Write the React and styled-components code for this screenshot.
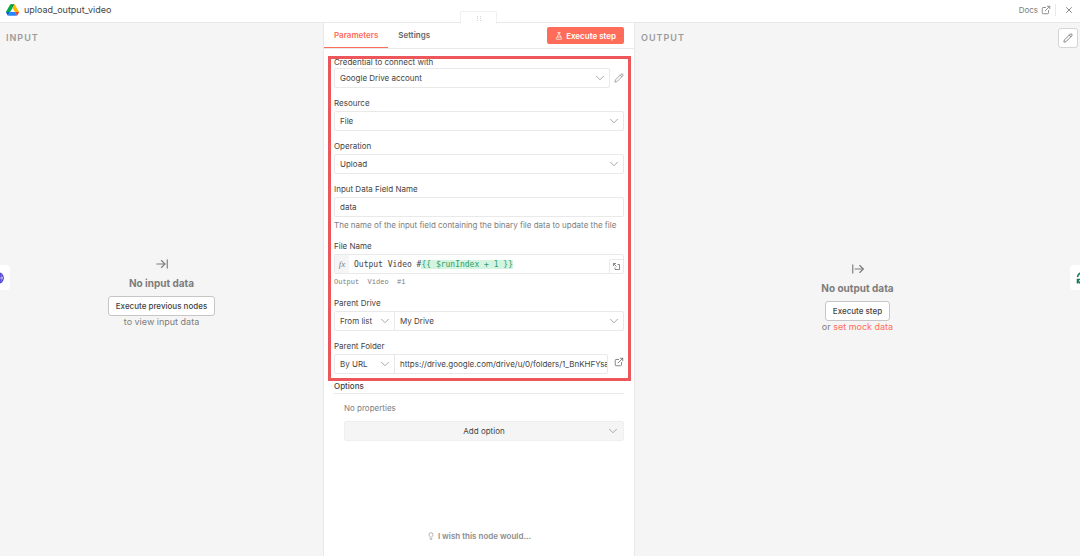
import React from "react";
import styled, { createGlobalStyle, css } from "styled-components";
import {
  ArrowRightFromLine,
  ArrowRightToLine,
  ChevronDown,
  ExternalLink,
  FlaskConical,
  Lightbulb,
  Pencil,
  X,
} from "lucide-react";

const color = {
  accent: "#ff6d5a",
  canvas: "#f5f5f5",
  line: "#e9e9e9",
  strong: "#c6c6c6",
  text: "#444444",
  muted: "#7d7d7d",
  faint: "#9a9a9a",
};

const GlobalStyle = createGlobalStyle`
  *, *::before, *::after { box-sizing: border-box; }
  body { margin: 0; background: ${color.canvas}; }
  body, button, input, select { font-family: Inter, "Liberation Sans", sans-serif; }
  button, input, select { margin: 0; }
`;

const Page = styled.div`
  display: flex;
  flex-direction: column;
  min-height: 100vh;
  color: ${color.text};
  font-size: 8px;
  line-height: 12px;
`;

const TopBar = styled.header`
  display: flex;
  align-items: center;
  justify-content: space-between;
  height: 23px;
  padding: 0 6px 2px;
  background: #fff;
  border-bottom: 1px solid ${color.line};
`;

const NodeTitle = styled.h1`
  display: flex;
  align-items: center;
  gap: 5px;
  margin: 0;
  font-size: 9px;
  font-weight: 400;
`;

const TopActions = styled.div`
  display: flex;
  align-items: center;
`;

const DocsLink = styled.a`
  display: flex;
  align-items: center;
  gap: 3px;
  padding-right: 4px;
  border-right: 1px solid ${color.line};
  color: ${color.muted};
  text-decoration: none;
`;

const IconButton = styled.button`
  display: grid;
  align-items: center;
  justify-items: ${(p) => (p.$end ? "end" : "center")};
  flex: none;
  width: ${(p) => p.$size || 10}px;
  height: ${(p) => p.$size || 10}px;
  padding: 0;
  border: 0;
  background: none;
  color: #707070;
`;

const CloseButton = styled(IconButton)`
  margin-left: 8px;
`;

const EditOutputButton = styled(IconButton)`
  background: #fff;
  border: 1px solid #d4d4d4;
  border-radius: 3px;
`;

const Columns = styled.main`
  display: grid;
  grid-template-columns: minmax(0, 323fr) 312px minmax(0, 445fr);
  flex: 1;
`;

const SidePanel = styled.section`
  position: relative;
  display: flex;
  flex-direction: column;
  overflow: hidden;
`;

const SideHeader = styled.div`
  display: flex;
  align-items: flex-start;
  justify-content: space-between;
  height: ${(p) => (p.$tall ? 33 : 23)}px;
  padding: 5px 2px 0 6px;
`;

const SideTitle = styled.h2`
  margin: 0;
  color: ${color.faint};
  font-size: 9px;
  font-weight: 600;
  line-height: 20px;
  letter-spacing: 1px;
`;

const EmptyState = styled.div`
  display: flex;
  flex: 1;
  flex-direction: column;
  align-items: center;
  justify-content: center;
  padding-bottom: 18px;
  color: ${color.muted};
  font-size: 9px;
`;

const EmptyTitle = styled.h3`
  margin: 6px 0;
  font-size: 10px;
  font-weight: 700;
  line-height: 13px;
`;

const OutlineButton = styled.button`
  height: 20px;
  padding: 0 7px;
  background: #fff;
  border: 1px solid ${color.strong};
  border-radius: 3px;
  color: ${color.text};
  font-size: 8px;
  font-weight: 500;
`;

const TextLink = styled.a`
  color: ${color.accent};
  text-decoration: none;
`;

const NeighbourTile = styled.button`
  position: absolute;
  top: 242px;
  ${(p) => p.$side}: 0;
  display: flex;
  align-items: center;
  justify-content: ${(p) => (p.$side === "left" ? "flex-end" : "flex-start")};
  width: 10px;
  height: 25px;
  padding: 0 ${(p) => (p.$side === "left" ? "6px 0 0" : "0 0 6px")};
  overflow: hidden;
  background: #fff;
  border: 0;
  border-radius: ${(p) => (p.$side === "left" ? "0 4px 4px 0" : "4px 0 0 4px")};
  color: ${(p) => p.$tint};

  svg { flex: none; }
`;

const CenterPanel = styled.section`
  position: relative;
  display: flex;
  flex-direction: column;
  background: #fff;
  border: solid ${color.line};
  border-width: 0 1px;
`;

const DragTab = styled.div`
  position: absolute;
  top: -12px;
  left: 50%;
  display: grid;
  place-items: center;
  width: 37px;
  height: 13px;
  margin-left: -19px;
  background: #fff;
  border: 1px solid #f0f0f0;
  border-bottom: 0;
  border-radius: 2px 2px 0 0;
`;

const TabBar = styled.div`
  display: flex;
  align-items: center;
  height: 26px;
  padding-right: 10px;
  border-bottom: 1px solid ${color.line};
`;

const Tab = styled.button`
  height: 25px;
  padding: 0 10px;
  background: none;
  border: 0;
  border-bottom: 1px solid ${(p) => (p.$active ? color.accent : "transparent")};
  color: ${(p) => (p.$active ? color.accent : "#666")};
  font-size: 8px;
  font-weight: 600;
`;

const RunButton = styled.button`
  display: flex;
  align-items: center;
  justify-content: center;
  gap: 3px;
  height: 17px;
  margin-left: auto;
  padding: 0 8px;
  background: ${color.accent};
  border: 0;
  border-radius: 2px;
  color: #fff;
  font-size: 8px;
  font-weight: 600;
`;

const Form = styled.form`
  display: flex;
  flex: 1;
  flex-direction: column;
  padding: 7px 10px 14px;
`;

const Fields = styled.div`
  position: relative;
  display: flex;
  flex-direction: column;
  gap: 9px;
`;

const Highlight = styled.div`
  position: absolute;
  inset: 0 -7px -7px -6px;
  border: 3px solid #ed565a;
  pointer-events: none;
`;

const Field = styled.div`
  display: flex;
  flex-direction: column;
`;

const Label = styled.label`
  margin-bottom: ${(p) => (p.$tight ? 0 : 2)}px;
  font-weight: 400;
`;

const Row = styled.div`
  display: flex;
  align-items: ${(p) => (p.$top ? "flex-start" : "center")};
`;

const controlBox = css`
  width: 100%;
  height: 20px;
  padding: 0 0 0 5px;
  background: #fff;
  border: 1px solid ${color.line};
  border-radius: ${(p) => p.$corners || "2px"};
  color: ${color.text};
  font-size: 8px;
`;

const SelectShell = styled.div`
  position: relative;
  flex: ${(p) => (p.$width ? `0 0 ${p.$width}px` : 1)};
  margin-right: ${(p) => (p.$overlap ? -1 : 0)}px;

  svg {
    position: absolute;
    top: 3px;
    right: 3px;
    color: #999;
    pointer-events: none;
  }
`;

const StyledSelect = styled.select`
  ${controlBox}
  appearance: none;
`;

const TextInput = styled.input`
  ${controlBox}
`;

const Help = styled.p`
  margin: 2px 0 0;
  color: ${color.muted};
`;

const Preview = styled.output`
  margin-top: 2px;
  color: ${color.muted};
  font-family: "Liberation Mono", monospace;
  font-size: 7px;
  white-space: pre;
`;

const Expression = styled.div`
  position: relative;
  display: flex;
  height: 20px;
  overflow: hidden;
  border: 1px solid ${color.line};
  border-radius: 2px;
`;

const FxBadge = styled.span`
  display: grid;
  place-items: center;
  width: 14px;
  background: ${color.canvas};
  color: ${color.muted};
  font-family: "Liberation Serif", serif;
  font-size: 9px;
  font-style: italic;
`;

const ExpressionText = styled.div`
  flex: 1;
  padding-left: 5px;
  font-family: "DejaVu Sans Mono", monospace;
  font-size: 8px;
  line-height: 19px;
  outline: 0;
  white-space: pre;
`;

const Token = styled.span`
  background: #d3f4e0;
  color: #2f9e6b;
`;

const ExpandButton = styled(IconButton)`
  position: absolute;
  right: 0;
  bottom: 0;
  background: #fff;
  border: solid ${color.line};
  border-width: 1px 0 0 1px;
  border-radius: 2px 0 0 0;
`;

const OptionsTitle = styled.h3`
  margin: 6px 0 0;
  padding-bottom: 1px;
  border-bottom: 1px solid ${color.line};
  font-size: 8px;
  font-weight: 500;
`;

const Options = styled.div`
  display: flex;
  flex-direction: column;
  gap: 7px;
  padding: 8px 0 0 10px;
  color: ${color.muted};
`;

const AddOption = styled.button`
  display: grid;
  grid-template-columns: 1fr auto 1fr;
  align-items: center;
  height: 20px;
  padding: 0 3px;
  background: ${color.canvas};
  border: 1px solid #efefef;
  border-radius: 2px;
  color: ${color.text};
  font-size: 8px;

  span { grid-column: 2; }
  svg { justify-self: end; color: #999; }
`;

const WishButton = styled.button`
  display: flex;
  align-items: center;
  align-self: center;
  gap: 3px;
  height: 12px;
  margin-top: auto;
  padding: 0;
  background: none;
  border: 0;
  color: #8c8c8c;
  font-size: 8px;
  font-weight: 600;
`;

const Chevron = () => <ChevronDown size={14} strokeWidth={1.5} aria-hidden="true" />;

function Select({ id, value, width, overlap, corners, label }) {
  return (
    <SelectShell $width={width} $overlap={overlap}>
      <StyledSelect id={id} aria-label={label} defaultValue={value} $corners={corners}>
        <option>{value}</option>
      </StyledSelect>
      <Chevron />
    </SelectShell>
  );
}

const DriveLogo = () => (
  <svg width="13" height="12" viewBox="0 0 87.3 78" aria-hidden="true">
    <path fill="#0066da" d="m6.6 66.85 3.85 6.65c.8 1.4 1.95 2.5 3.3 3.3L27.5 53H0c0 1.55.4 3.1 1.2 4.5z" />
    <path fill="#00ac47" d="M43.65 25 29.9 1.2c-1.35.8-2.5 1.9-3.3 3.3L1.2 48.5A9 9 0 0 0 0 53h27.5z" />
    <path fill="#ea4335" d="M73.55 76.8c1.35-.8 2.5-1.9 3.3-3.3l1.6-2.75L86.1 57.5c.8-1.4 1.2-2.95 1.2-4.5H59.8l5.85 11.5z" />
    <path fill="#00832d" d="M43.65 25 57.4 1.2C56.05.4 54.5 0 52.9 0H34.4c-1.6 0-3.15.45-4.5 1.2z" />
    <path fill="#2684fc" d="M59.8 53H27.5L13.75 76.8c1.35.8 2.9 1.2 4.5 1.2h50.8c1.6 0 3.15-.45 4.5-1.2z" />
    <path fill="#ffba00" d="M73.4 26.5 60.7 4.5c-.8-1.4-1.95-2.5-3.3-3.3L43.65 25 59.8 53h27.45c0-1.55-.4-3.1-1.2-4.5z" />
  </svg>
);

const DragDots = () => (
  <svg width="4" height="5" viewBox="0 0 4 5" fill="#d6d6d6" aria-hidden="true">
    <path d="M0 0h1v1H0zM3 0h1v1H3zM0 2h1v1H0zM3 2h1v1H3zM0 4h1v1H0zM3 4h1v1H3z" />
  </svg>
);

const ExpandIcon = () => (
  <svg width="7" height="7" viewBox="0 0 14 14" fill="none" stroke="currentColor" strokeWidth="1.6" aria-hidden="true">
    <path d="M1 6V1h5M1 1l6 6M9 3h4v10H4V9" />
  </svg>
);

const GlobeIcon = () => (
  <svg width="12" height="12" viewBox="0 0 12 12" fill="none" stroke="currentColor" strokeWidth="1.2" aria-hidden="true">
    <circle cx="6" cy="6" r="5.3" />
    <ellipse cx="6" cy="6" rx="3" ry="5.3" />
    <path d="M1.2 4h9.6M1.2 8h9.6" />
  </svg>
);

const SyncIcon = () => (
  <svg width="14" height="14" viewBox="0 0 14 14" fill="none" stroke="currentColor" strokeWidth="1.6" aria-hidden="true">
    <path d="M1.5 6a5.5 5.5 0 0 1 10-2M12 1v3H9M5.5 8.5H1.5v4M1.5 8.5A5.5 5.5 0 0 0 12 9" />
  </svg>
);

export default function App() {
  return (
    <>
      <GlobalStyle />
      <Page>
        <TopBar>
          <NodeTitle><DriveLogo />upload_output_video</NodeTitle>
          <TopActions>
            <DocsLink href="#docs">Docs <ExternalLink size={10} /></DocsLink>
            <CloseButton type="button" aria-label="Close"><X size={10} /></CloseButton>
          </TopActions>
        </TopBar>
        <Columns>
          <SidePanel>
            <SideHeader><SideTitle>INPUT</SideTitle></SideHeader>
            <EmptyState>
              <ArrowRightToLine size={14} />
              <EmptyTitle>No input data</EmptyTitle>
              <OutlineButton type="button">Execute previous nodes</OutlineButton>
              <span>to view input data</span>
            </EmptyState>
            <NeighbourTile type="button" aria-label="Previous node" $side="left" $tint="#4a3fd0">
              <GlobeIcon />
            </NeighbourTile>
          </SidePanel>

          <CenterPanel>
            <DragTab><DragDots /></DragTab>
            <TabBar>
              <Tab type="button" $active>Parameters</Tab>
              <Tab type="button">Settings</Tab>
              <RunButton type="button"><FlaskConical size={8} />Execute step</RunButton>
            </TabBar>
            <Form>
              <Fields>
                <Field>
                  <Label htmlFor="credential" $tight>Credential to connect with</Label>
                  <Row>
                    <Select id="credential" value="Google Drive account" />
                    <IconButton type="button" aria-label="Edit credential" $size={14} $end>
                      <Pencil size={10} strokeWidth={1.5} />
                    </IconButton>
                  </Row>
                </Field>
                <Field>
                  <Label htmlFor="resource">Resource</Label>
                  <Row><Select id="resource" value="File" /></Row>
                </Field>
                <Field>
                  <Label htmlFor="operation">Operation</Label>
                  <Row><Select id="operation" value="Upload" /></Row>
                </Field>
                <Field>
                  <Label htmlFor="data-field">Input Data Field Name</Label>
                  <TextInput id="data-field" defaultValue="data" />
                  <Help>The name of the input field containing the binary file data to update the file</Help>
                </Field>
                <Field>
                  <Label as="span" id="file-name-label">File Name</Label>
                  <Expression>
                    <FxBadge>fx</FxBadge>
                    <ExpressionText role="textbox" aria-labelledby="file-name-label" contentEditable suppressContentEditableWarning>
                      Output Video #<Token>{"{{ $runIndex + 1 }}"}</Token>
                    </ExpressionText>
                    <ExpandButton type="button" aria-label="Open editor" $size={14}><ExpandIcon /></ExpandButton>
                  </Expression>
                  <Preview>{"Output  Video  #1"}</Preview>
                </Field>
                <Field>
                  <Label htmlFor="drive">Parent Drive</Label>
                  <Row>
                    <Select label="Parent drive mode" value="From list" width={61} overlap corners="2px 0 0 2px" />
                    <Select id="drive" value="My Drive" corners="0 2px 2px 0" />
                  </Row>
                </Field>
                <Field>
                  <Label htmlFor="folder">Parent Folder</Label>
                  <Row $top>
                    <Select label="Parent folder mode" value="By URL" width={61} overlap corners="2px 0 0 2px" />
                    <TextInput
                      id="folder"
                      $corners="0 2px 2px 0"
                      defaultValue="https://drive.google.com/drive/u/0/folders/1_BnKHFYsaaQ"
                    />
                    <IconButton type="button" aria-label="Open folder" $size={16} $end><ExternalLink size={10} /></IconButton>
                  </Row>
                </Field>
                <Highlight />
              </Fields>
              <OptionsTitle>Options</OptionsTitle>
              <Options>
                <span>No properties</span>
                <AddOption type="button"><span>Add option</span><Chevron /></AddOption>
              </Options>
              <WishButton type="button"><Lightbulb size={8} />I wish this node would...</WishButton>
            </Form>
          </CenterPanel>

          <SidePanel>
            <SideHeader $tall>
              <SideTitle>OUTPUT</SideTitle>
              <EditOutputButton type="button" aria-label="Edit output" $size={20}><Pencil size={10} /></EditOutputButton>
            </SideHeader>
            <EmptyState>
              <ArrowRightFromLine size={14} />
              <EmptyTitle>No output data</EmptyTitle>
              <OutlineButton type="button">Execute step</OutlineButton>
              <span>or <TextLink href="#mock">set mock data</TextLink></span>
            </EmptyState>
            <NeighbourTile type="button" aria-label="Next node" $side="right" $tint="#1b7a5a">
              <SyncIcon />
            </NeighbourTile>
          </SidePanel>
        </Columns>
      </Page>
    </>
  );
}
